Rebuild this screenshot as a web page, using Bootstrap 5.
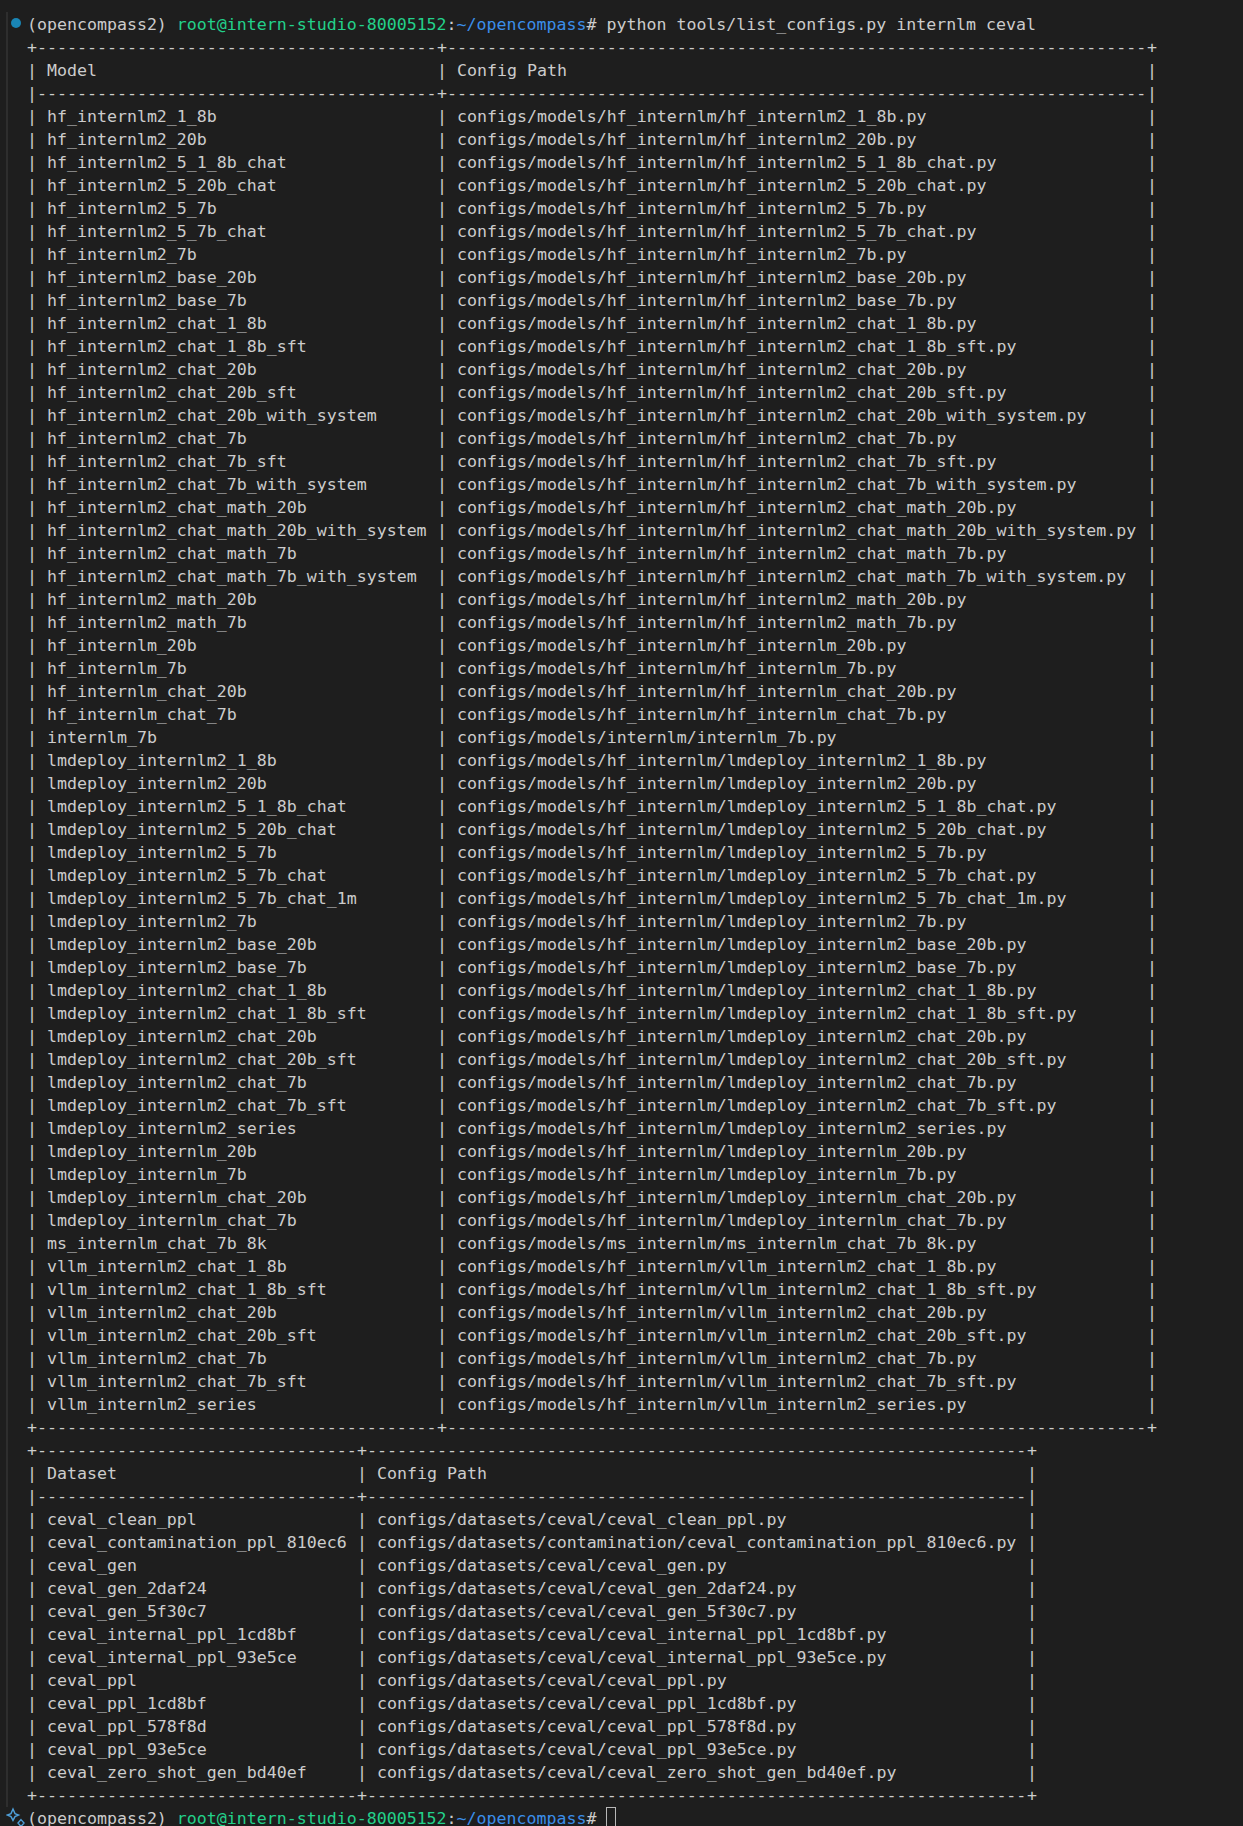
<!DOCTYPE html>
<html lang="en">
<head>
<meta charset="utf-8">
<title>Terminal</title>
<link href="https://cdn.jsdelivr.net/npm/bootstrap@5.3.0/dist/css/bootstrap.min.css" rel="stylesheet">
<style>
html, body { height: 100%; }
body { background: #1e1e1e; color: #cccccc; font-family: "DejaVu Sans Mono", "Liberation Mono", monospace; font-size: 16.6px; line-height: 23px; }
.term-wrap { padding: 13px 0 0 6px; }
.cmd-block { border-left: 2px solid #2e2e2e; margin-top: -1px; padding-top: 1px; }
.term-line { height: 23px; white-space: pre; }
.gutter { flex: 0 0 19px; width: 19px; }
.gutter-last { flex: 0 0 21px; width: 21px; }
.dot-ok { width: 10px; height: 10px; border-radius: 50%; background: #1a85b5; margin: 5px 0 0 3px; }
.tp-green { color: #23d18b; }
.tp-blue { color: #3b8eea; }
.cursor-box { width: 10px; height: 24px; border: 1px solid #b8b8b8; margin-left: 10px; }
.ascii-table { table-layout: fixed; margin-left: 19px; border-collapse: collapse; }
.ascii-table td { padding: 0; height: 23px; white-space: nowrap; overflow: visible; }
.cm1 { width: 410px; }
.cm2 { width: 710px; }
.cd1 { width: 330px; }
.cd2 { width: 670px; }
.cend { width: 20px; }
</style>
</head>
<body class="overflow-hidden">
<div class="term-wrap">
<div class="cmd-block">
<div class="term-line d-flex"><span class="gutter"><span class="dot-ok d-block"></span></span><span>(opencompass2) <span class="tp-green">root@intern-studio-80005152</span>:<span class="tp-blue">~/opencompass</span># python tools/list_configs.py internlm ceval</span></div>
<table class="ascii-table">
<colgroup><col class="cm1"><col class="cm2"><col class="cend"></colgroup>
<tbody>
<tr><td>+----------------------------------------<td>+----------------------------------------------------------------------<td>+
<tr><td>| Model<td>| Config Path<td>|
<tr><td>|----------------------------------------<td>+----------------------------------------------------------------------<td>|
<tr><td>| hf_internlm2_1_8b<td>| configs/models/hf_internlm/hf_internlm2_1_8b.py<td>|
<tr><td>| hf_internlm2_20b<td>| configs/models/hf_internlm/hf_internlm2_20b.py<td>|
<tr><td>| hf_internlm2_5_1_8b_chat<td>| configs/models/hf_internlm/hf_internlm2_5_1_8b_chat.py<td>|
<tr><td>| hf_internlm2_5_20b_chat<td>| configs/models/hf_internlm/hf_internlm2_5_20b_chat.py<td>|
<tr><td>| hf_internlm2_5_7b<td>| configs/models/hf_internlm/hf_internlm2_5_7b.py<td>|
<tr><td>| hf_internlm2_5_7b_chat<td>| configs/models/hf_internlm/hf_internlm2_5_7b_chat.py<td>|
<tr><td>| hf_internlm2_7b<td>| configs/models/hf_internlm/hf_internlm2_7b.py<td>|
<tr><td>| hf_internlm2_base_20b<td>| configs/models/hf_internlm/hf_internlm2_base_20b.py<td>|
<tr><td>| hf_internlm2_base_7b<td>| configs/models/hf_internlm/hf_internlm2_base_7b.py<td>|
<tr><td>| hf_internlm2_chat_1_8b<td>| configs/models/hf_internlm/hf_internlm2_chat_1_8b.py<td>|
<tr><td>| hf_internlm2_chat_1_8b_sft<td>| configs/models/hf_internlm/hf_internlm2_chat_1_8b_sft.py<td>|
<tr><td>| hf_internlm2_chat_20b<td>| configs/models/hf_internlm/hf_internlm2_chat_20b.py<td>|
<tr><td>| hf_internlm2_chat_20b_sft<td>| configs/models/hf_internlm/hf_internlm2_chat_20b_sft.py<td>|
<tr><td>| hf_internlm2_chat_20b_with_system<td>| configs/models/hf_internlm/hf_internlm2_chat_20b_with_system.py<td>|
<tr><td>| hf_internlm2_chat_7b<td>| configs/models/hf_internlm/hf_internlm2_chat_7b.py<td>|
<tr><td>| hf_internlm2_chat_7b_sft<td>| configs/models/hf_internlm/hf_internlm2_chat_7b_sft.py<td>|
<tr><td>| hf_internlm2_chat_7b_with_system<td>| configs/models/hf_internlm/hf_internlm2_chat_7b_with_system.py<td>|
<tr><td>| hf_internlm2_chat_math_20b<td>| configs/models/hf_internlm/hf_internlm2_chat_math_20b.py<td>|
<tr><td>| hf_internlm2_chat_math_20b_with_system<td>| configs/models/hf_internlm/hf_internlm2_chat_math_20b_with_system.py<td>|
<tr><td>| hf_internlm2_chat_math_7b<td>| configs/models/hf_internlm/hf_internlm2_chat_math_7b.py<td>|
<tr><td>| hf_internlm2_chat_math_7b_with_system<td>| configs/models/hf_internlm/hf_internlm2_chat_math_7b_with_system.py<td>|
<tr><td>| hf_internlm2_math_20b<td>| configs/models/hf_internlm/hf_internlm2_math_20b.py<td>|
<tr><td>| hf_internlm2_math_7b<td>| configs/models/hf_internlm/hf_internlm2_math_7b.py<td>|
<tr><td>| hf_internlm_20b<td>| configs/models/hf_internlm/hf_internlm_20b.py<td>|
<tr><td>| hf_internlm_7b<td>| configs/models/hf_internlm/hf_internlm_7b.py<td>|
<tr><td>| hf_internlm_chat_20b<td>| configs/models/hf_internlm/hf_internlm_chat_20b.py<td>|
<tr><td>| hf_internlm_chat_7b<td>| configs/models/hf_internlm/hf_internlm_chat_7b.py<td>|
<tr><td>| internlm_7b<td>| configs/models/internlm/internlm_7b.py<td>|
<tr><td>| lmdeploy_internlm2_1_8b<td>| configs/models/hf_internlm/lmdeploy_internlm2_1_8b.py<td>|
<tr><td>| lmdeploy_internlm2_20b<td>| configs/models/hf_internlm/lmdeploy_internlm2_20b.py<td>|
<tr><td>| lmdeploy_internlm2_5_1_8b_chat<td>| configs/models/hf_internlm/lmdeploy_internlm2_5_1_8b_chat.py<td>|
<tr><td>| lmdeploy_internlm2_5_20b_chat<td>| configs/models/hf_internlm/lmdeploy_internlm2_5_20b_chat.py<td>|
<tr><td>| lmdeploy_internlm2_5_7b<td>| configs/models/hf_internlm/lmdeploy_internlm2_5_7b.py<td>|
<tr><td>| lmdeploy_internlm2_5_7b_chat<td>| configs/models/hf_internlm/lmdeploy_internlm2_5_7b_chat.py<td>|
<tr><td>| lmdeploy_internlm2_5_7b_chat_1m<td>| configs/models/hf_internlm/lmdeploy_internlm2_5_7b_chat_1m.py<td>|
<tr><td>| lmdeploy_internlm2_7b<td>| configs/models/hf_internlm/lmdeploy_internlm2_7b.py<td>|
<tr><td>| lmdeploy_internlm2_base_20b<td>| configs/models/hf_internlm/lmdeploy_internlm2_base_20b.py<td>|
<tr><td>| lmdeploy_internlm2_base_7b<td>| configs/models/hf_internlm/lmdeploy_internlm2_base_7b.py<td>|
<tr><td>| lmdeploy_internlm2_chat_1_8b<td>| configs/models/hf_internlm/lmdeploy_internlm2_chat_1_8b.py<td>|
<tr><td>| lmdeploy_internlm2_chat_1_8b_sft<td>| configs/models/hf_internlm/lmdeploy_internlm2_chat_1_8b_sft.py<td>|
<tr><td>| lmdeploy_internlm2_chat_20b<td>| configs/models/hf_internlm/lmdeploy_internlm2_chat_20b.py<td>|
<tr><td>| lmdeploy_internlm2_chat_20b_sft<td>| configs/models/hf_internlm/lmdeploy_internlm2_chat_20b_sft.py<td>|
<tr><td>| lmdeploy_internlm2_chat_7b<td>| configs/models/hf_internlm/lmdeploy_internlm2_chat_7b.py<td>|
<tr><td>| lmdeploy_internlm2_chat_7b_sft<td>| configs/models/hf_internlm/lmdeploy_internlm2_chat_7b_sft.py<td>|
<tr><td>| lmdeploy_internlm2_series<td>| configs/models/hf_internlm/lmdeploy_internlm2_series.py<td>|
<tr><td>| lmdeploy_internlm_20b<td>| configs/models/hf_internlm/lmdeploy_internlm_20b.py<td>|
<tr><td>| lmdeploy_internlm_7b<td>| configs/models/hf_internlm/lmdeploy_internlm_7b.py<td>|
<tr><td>| lmdeploy_internlm_chat_20b<td>| configs/models/hf_internlm/lmdeploy_internlm_chat_20b.py<td>|
<tr><td>| lmdeploy_internlm_chat_7b<td>| configs/models/hf_internlm/lmdeploy_internlm_chat_7b.py<td>|
<tr><td>| ms_internlm_chat_7b_8k<td>| configs/models/ms_internlm/ms_internlm_chat_7b_8k.py<td>|
<tr><td>| vllm_internlm2_chat_1_8b<td>| configs/models/hf_internlm/vllm_internlm2_chat_1_8b.py<td>|
<tr><td>| vllm_internlm2_chat_1_8b_sft<td>| configs/models/hf_internlm/vllm_internlm2_chat_1_8b_sft.py<td>|
<tr><td>| vllm_internlm2_chat_20b<td>| configs/models/hf_internlm/vllm_internlm2_chat_20b.py<td>|
<tr><td>| vllm_internlm2_chat_20b_sft<td>| configs/models/hf_internlm/vllm_internlm2_chat_20b_sft.py<td>|
<tr><td>| vllm_internlm2_chat_7b<td>| configs/models/hf_internlm/vllm_internlm2_chat_7b.py<td>|
<tr><td>| vllm_internlm2_chat_7b_sft<td>| configs/models/hf_internlm/vllm_internlm2_chat_7b_sft.py<td>|
<tr><td>| vllm_internlm2_series<td>| configs/models/hf_internlm/vllm_internlm2_series.py<td>|
<tr><td>+----------------------------------------<td>+----------------------------------------------------------------------<td>+
</tbody>
</table>
<table class="ascii-table">
<colgroup><col class="cd1"><col class="cd2"><col class="cend"></colgroup>
<tbody>
<tr><td>+--------------------------------<td>+------------------------------------------------------------------<td>+
<tr><td>| Dataset<td>| Config Path<td>|
<tr><td>|--------------------------------<td>+------------------------------------------------------------------<td>|
<tr><td>| ceval_clean_ppl<td>| configs/datasets/ceval/ceval_clean_ppl.py<td>|
<tr><td>| ceval_contamination_ppl_810ec6<td>| configs/datasets/contamination/ceval_contamination_ppl_810ec6.py<td>|
<tr><td>| ceval_gen<td>| configs/datasets/ceval/ceval_gen.py<td>|
<tr><td>| ceval_gen_2daf24<td>| configs/datasets/ceval/ceval_gen_2daf24.py<td>|
<tr><td>| ceval_gen_5f30c7<td>| configs/datasets/ceval/ceval_gen_5f30c7.py<td>|
<tr><td>| ceval_internal_ppl_1cd8bf<td>| configs/datasets/ceval/ceval_internal_ppl_1cd8bf.py<td>|
<tr><td>| ceval_internal_ppl_93e5ce<td>| configs/datasets/ceval/ceval_internal_ppl_93e5ce.py<td>|
<tr><td>| ceval_ppl<td>| configs/datasets/ceval/ceval_ppl.py<td>|
<tr><td>| ceval_ppl_1cd8bf<td>| configs/datasets/ceval/ceval_ppl_1cd8bf.py<td>|
<tr><td>| ceval_ppl_578f8d<td>| configs/datasets/ceval/ceval_ppl_578f8d.py<td>|
<tr><td>| ceval_ppl_93e5ce<td>| configs/datasets/ceval/ceval_ppl_93e5ce.py<td>|
<tr><td>| ceval_zero_shot_gen_bd40ef<td>| configs/datasets/ceval/ceval_zero_shot_gen_bd40ef.py<td>|
<tr><td>+--------------------------------<td>+------------------------------------------------------------------<td>+
</tbody>
</table>
</div>
<div class="term-line d-flex"><span class="gutter-last"><svg width="21" height="23" viewBox="0 0 21 23" fill="none" stroke="#4f9fd8" stroke-width="1.4" class="d-block"><path d="M7 2 L9 6.6 L12.6 8 L9 9.6 L7 13.4 L5 9.6 L1.4 8 L5 6.6 Z"/><path d="M15 12.6 L18 16 L15 19.4 L12 16 Z"/></svg></span><span>(opencompass2) <span class="tp-green">root@intern-studio-80005152</span>:<span class="tp-blue">~/opencompass</span>#</span><span class="cursor-box d-block"></span></div>
</div>
<script src="https://cdn.jsdelivr.net/npm/bootstrap@5.3.0/dist/js/bootstrap.bundle.min.js"></script>
</body>
</html>
